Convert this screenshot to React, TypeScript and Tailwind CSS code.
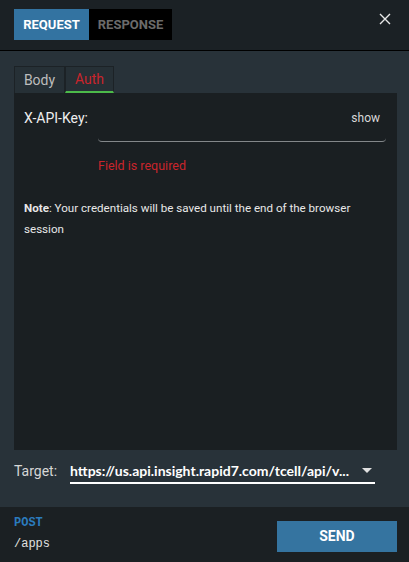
import { useState } from "react";

const roboto = { fontFamily: "Roboto, 'Noto Sans', sans-serif" };

export default function App() {
  const [tab, setTab] = useState<"request" | "response">("request");
  const [sub, setSub] = useState<"body" | "auth">("auth");

  return (
    <div
      className="flex h-[562px] w-[409px] flex-col overflow-hidden bg-[#283239] text-[#e6e6e6]"
      style={roboto}
    >
      {/* header */}
      <header className="flex h-[51px] shrink-0 items-start justify-between border-b border-black bg-[#1b2125] pl-[14px] pr-[18px] pt-[9px]">
        <div className="flex h-[31px] text-[13px] font-bold">
          <button
            type="button"
            onClick={() => setTab("request")}
            className={`w-[75px] uppercase ${tab === "request" ? "bg-[#3373a1] text-white" : "bg-black text-[#6b6b6b]"}`}
          >
            Request
          </button>
          <button
            type="button"
            onClick={() => setTab("response")}
            className={`w-[83px] uppercase ${tab === "response" ? "bg-[#3373a1] text-white" : "bg-black text-[#6b6b6b]"}`}
          >
            Response
          </button>
        </div>
        <button type="button" className="mt-[4px] text-[#e8e8e8]">
          <svg width="12" height="12" viewBox="0 0 12 12">
            <path d="M1 1L11 11M11 1L1 11" stroke="currentColor" strokeWidth="1.4" />
          </svg>
        </button>
      </header>

      {/* body */}
      <div className="flex flex-1 flex-col pl-[14px] pr-[12px] pt-[15px]">
        <div className="flex h-[27px] text-[14px]">
          <button
            type="button"
            onClick={() => setSub("body")}
            className={`w-[51px] border border-b-0 border-[#1c2226] bg-[#263036] ${sub === "body" ? "border-b-2 border-b-[#4cba4a] text-[#d32f2f]" : "text-[#bdbdbd]"}`}
          >
            Body
          </button>
          <button
            type="button"
            onClick={() => setSub("auth")}
            className={`w-[49px] border border-[#1c2226] bg-[#263036] ${sub === "auth" ? "border-b-2 border-b-[#4cba4a] text-[#c9252c]" : "text-[#bdbdbd]"}`}
          >
            Auth
          </button>
        </div>

        <section className="h-[357px] bg-[#1a1f22] px-[10px] pt-[14px]">
          <div className="flex">
            <label className="w-[74px] pt-[1px] text-[14px] leading-[20px] text-[#eeeeee]">
              X-API-Key:
            </label>
            <div className="flex-1 pr-[1px]">
              <div className="flex h-[35px] items-start justify-end rounded-b-[4px] border-b border-[#83878a] pr-[6px]">
                <span className="pt-[2px] text-[12px] text-[#d8d8d8]">show</span>
              </div>
              <p className="mt-[15px] text-[12.5px] leading-[18px] text-[#c9252c]">
                Field is required
              </p>
            </div>
          </div>
          <p className="mt-[23px] text-[11.6px] leading-[21px] text-[#e8e8e8]">
            <span className="font-bold">Note</span>: Your credentials will be saved until the end of the browser session
          </p>
        </section>

        <div className="mt-[11px] flex items-start">
          <span className="w-[56px] text-[14px] leading-[20px] text-[#d6d6d6]">Target:</span>
          <div className="flex h-[23px] w-[305px] items-start justify-between border-b-2 border-white pr-[3px]">
            <span
              className="text-[14px] font-bold leading-[20px] text-white"
              style={{ fontFamily: "Lato, Roboto, sans-serif" }}
            >
              https://us.api.insight.rapid7.com/tcell/api/v...
            </span>
            <svg width="10" height="6" viewBox="0 0 10 6" className="mt-[7px]">
              <path d="M0 0H10L5 5Z" fill="#e0e0e0" />
            </svg>
          </div>
        </div>
      </div>

      {/* footer */}
      <footer className="flex h-[55px] shrink-0 items-start justify-between bg-[#1b2023] pl-[14px] pr-[12px] pt-[14px]">
        <div
          className="-mt-[6px]"
          style={{ fontFamily: "'Liberation Mono', 'DejaVu Sans Mono', monospace" }}
        >
          <div className="text-[12px] font-bold leading-[16px] text-[#2b7bbd]">POST</div>
          <div className="mt-[5px] text-[12px] leading-[16px] text-[#e0e0e0]">/apps</div>
        </div>
        <button
          type="button"
          className="h-[31px] w-[120px] bg-[#3574a0] text-[14px] font-bold text-white"
        >
          SEND
        </button>
      </footer>
    </div>
  );
}
